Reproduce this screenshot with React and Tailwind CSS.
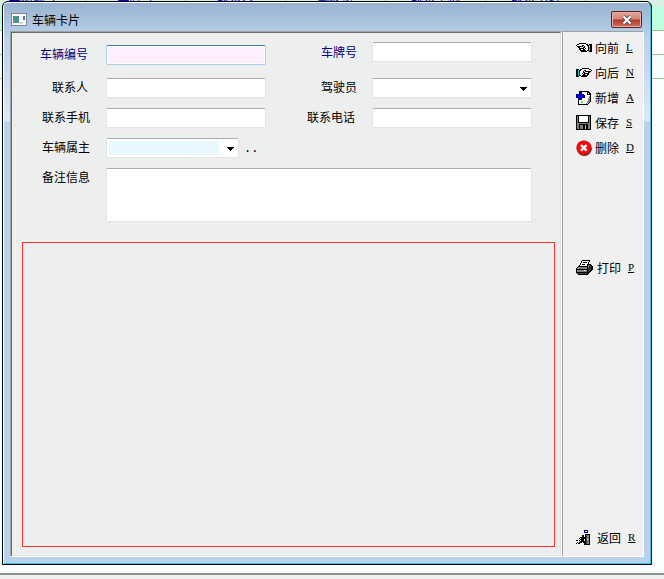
import { useState } from 'react';
import clsx from 'clsx';

const palette = {
  k: '#000000',
  w: '#ffffff',
  g: '#808080',
  l: '#c0c0c0',
  d: '#404040',
  b: '#0000ff',
  n: '#000080',
  c: '#00e0e0',
  e: '#40f060',
};

const handLeft = [
  '...kkkkkkk......',
  '.kkwwwwwwwkk.kkk',
  'kwwwwwkkwwwkkckk',
  '.kkkkkkwkwwwkckk',
  '..kkwwwkkwwwkckk',
  '...kkkkkwkwwkckk',
  '...kkwwkkwwwkckk',
  '....kkkkkkwkkckk',
  '.....kkkkkk..kkk',
];

const handRight = handLeft.map((row) => row.split('').reverse().join(''));

const addPage = [
  '...kkkkkkkkkk..',
  '...nnnwwwwwkkk.',
  '...nbnwwwwwkwkk',
  'nnnnbnnnwwwkkkk',
  'nbbbbbbbnwwwwwk',
  'nbbbbbbbnwwwwgk',
  'nnnbbnnnnwwwwgk',
  '..nbbnwwwwwwggk',
  '..nnnnwwwwwwggk',
  '..kwwwwwwwwwggk',
  '..kwweewwwwgggk',
  '..kwweewwwwglk.',
  '..kwwwwwwwglk..',
  '..kkkkkkkkkk...',
];

const floppy = [
  'kkkkkkkkkkkkkkk',
  'kgkwwwwwwwwwkgk',
  'kgkwwwwwwwwwkgk',
  'kgkwwwwwwwwwkgk',
  'kgkwwwwwwwwwkgk',
  'kgkwwwwwwwwwkgk',
  'kgkwwwwwwwwwkgk',
  'kgkkkkkkkkkkkgk',
  'kgggggggggggggk',
  'kggkkkkkkkkkggk',
  'kggkgggkklkkggk',
  'kggkgggkklkkggk',
  'kggkgggkklkkggk',
  'kggkgggkklkkggk',
  'kkkkkkkkkkkkkkk',
];

const printer = [
  '......kkkkkkkk...',
  '.....kwwwwwwwk...',
  '.....kwkkkkwk....',
  '....kwwwwwwwk....',
  '....kwkkkwwkkkk..',
  '...kwwwwwwwkggkk.',
  '..kkkkkkkkkkgkgkk',
  '.kgggggggggkgkdkk',
  'kggggggggggkkddkk',
  'kkkkkkkkkkkkdddkk',
  'kgggggggwlgkddkk.',
  'kggggggggggkdkk..',
  'kkkkkkkkkkkkkk...',
  '.kdddddddddkk....',
  '..kkkkkkkkkk.....',
];

const exitDoor = [
  '........nnnn...',
  '........nwwn...',
  '........nnnn...',
  '...............',
  '.........kkkkk.',
  '......kk.kdggk.',
  '......kk.kdggk.',
  '....kkkkkkdggk.',
  '...k.kkkkkdggk.',
  '....kkkk.kdwgk.',
  'kk.k.kkk.kdggk.',
  '....kkkkkkdggk.',
  '.k.kkk.kkkdggk.',
  'k.kk....kkdggk.',
  '........kkkkkk.',
];

function PixelIcon({ rows }) {
  const width = rows[0].length;

  return (
    <svg
      width={width}
      height={rows.length}
      viewBox={`0 0 ${width} ${rows.length}`}
      shapeRendering="crispEdges"
      aria-hidden="true"
      className="shrink-0"
    >
      {rows.map((row, y) =>
        row.split('').map((p, x) =>
          palette[p] ? <rect key={`${x}-${y}`} x={x} y={y} width="1" height="1" fill={palette[p]} /> : null
        )
      )}
    </svg>
  );
}

function DeleteIcon() {
  return (
    <svg width="16" height="16" viewBox="0 0 16 16" aria-hidden="true" className="shrink-0">
      <circle cx="8.3" cy="8.3" r="7.6" fill="#7a2020" />
      <circle cx="7.7" cy="7.7" r="7.3" fill="#f00c10" />
      <path d="M5 5l5.6 5.6M10.6 5L5 10.6" stroke="#fff" strokeWidth="2.4" />
    </svg>
  );
}

function WindowIcon() {
  return (
    <svg width="16" height="13" viewBox="0 0 16 13" aria-hidden="true" className="shrink-0">
      <rect width="16" height="13" fill="#7f858c" />
      <rect x="1" y="1" width="14" height="11" fill="#fafafa" />
      <rect x="2" y="3" width="6" height="7" fill="#4f8f96" />
      <rect x="2" y="3" width="3" height="4" fill="#3c9a78" />
      <rect x="12" y="3" width="2" height="4" fill="#3f7fb8" />
      <rect x="8" y="9" width="4" height="2" fill="#d4d4d4" />
    </svg>
  );
}

const fieldBorder = 'border border-[#e2e3ea] border-t-[#abadb3] rounded-[2px]';

function Label({ htmlFor, className, children }) {
  return (
    <label htmlFor={htmlFor} className={clsx('pb-[2px] text-right whitespace-nowrap', className)}>
      {children}
    </label>
  );
}

function TextField({ id, className }) {
  const [value, setValue] = useState('');

  return (
    <input
      id={id}
      type="text"
      value={value}
      onChange={(e) => setValue(e.target.value)}
      className={clsx('block w-full h-5 px-px outline-none', className || `bg-white ${fieldBorder}`)}
    />
  );
}

function SelectField({ id, className, selectClass }) {
  return (
    <div className={clsx('relative h-5 bg-white', fieldBorder, className)}>
      <select
        id={id}
        className={clsx('block w-full h-full appearance-none outline-none bg-clip-content py-[2px] pl-[2px] pr-[19px]', selectClass)}
      >
        <option value=""></option>
      </select>
      <svg
        width="7"
        height="4"
        viewBox="0 0 7 4"
        shapeRendering="crispEdges"
        className="absolute right-1 top-2 pointer-events-none"
      >
        <path d="M0 0h7v1h-1v1h-1v1h-1v1h-1v-1h-1v-1h-1v-1h-1z" />
      </svg>
    </div>
  );
}

function SideButton({ icon, label, hotkey, className, iconClass = 'w-4' }) {
  return (
    <button type="button" className={clsx('flex h-[25px] items-center pl-[13px] whitespace-nowrap', className)}>
      <span className={clsx('shrink-0', iconClass)}>{icon}</span>
      <span className="ml-[3px]">{label}</span>
      <span className="ml-[7px] font-['Liberation_Serif',serif] text-[11px] underline">{hotkey}</span>
    </button>
  );
}

// grid of the parent window, only its edges stay visible
function VehicleList() {
  const headers = ['车辆编号', '车牌号', '联系人', '驾驶员', '联系手机', '联系电话'];

  return (
    <div className="col-start-1 row-start-1 flex flex-col bg-white overflow-hidden">
      <div className="flex h-[7px] shrink-0 overflow-hidden bg-[#d9f0e4] text-[#0000c8] leading-3">
        {headers.map((h, i) => (
          <div
            key={h}
            className={clsx('flex h-[7px] shrink-0 items-end justify-center overflow-hidden border-r border-[#a0c8a0] pb-1', i === 0 ? 'w-[86px] pr-5' : 'w-[100px]')}
          >
            {h}
          </div>
        ))}
      </div>
      <div className="h-6 border-b border-[#98c898] bg-[#bfffdf]" />
      <div className="h-6 border-b border-[#98c898] bg-white" />
      <div className="h-6 border-b border-[#98c898] bg-[#f5fffd]" />
      <div className="grow bg-[#fafffd]" />
      <div className="h-[6px] border-t-2 border-[#909090] bg-[#f0f0f0]" />
    </div>
  );
}

export default function App() {
  return (
    <div className="grid min-h-screen font-['Noto_Sans_CJK_SC',sans-serif] text-xs text-black">
      <VehicleList />

      <div className="col-start-1 row-start-1 z-10 mt-px mb-[14px] ml-[2px] mr-3 flex rounded-t-[6px] border border-black bg-black">
        <div className="flex grow flex-col rounded-t-[5px] border border-r-[#35c8e8] border-b-[#35c8e8] border-t-white border-l-white bg-[linear-gradient(#99b4d1_0px,#b9d1ea_34px,#dce9f6_118px,#b9d1ea_119px)] px-[6px] pb-[6px]">
          <div className="flex h-7 shrink-0 items-center pt-[5px] pl-px">
            <WindowIcon />
            <h1 className="ml-[5px]">车辆卡片</h1>
            <button
              type="button"
              aria-label="关闭"
              className="ml-auto mr-[2px] flex h-[17px] w-[31px] items-center justify-center rounded-[2px] border border-[#5c1f22] bg-[linear-gradient(#e5a49a_0px,#d5857a_7px,#b5382a_8px,#d0705c_15px)] shadow-[inset_0_0_0_1px_#e8b0a8]"
            >
              <svg width="12" height="10" viewBox="0 0 12 10" aria-hidden="true">
                <path d="M2.5 1.5L9.5 8.5M9.5 1.5L2.5 8.5" stroke="#5c5560" strokeWidth="4" />
                <path d="M2.5 1.5L9.5 8.5M9.5 1.5L2.5 8.5" stroke="#fff" strokeWidth="2" />
              </svg>
            </button>
          </div>

          <div className="flex grow">
            <form className="flex grow border border-r-white border-b-white border-t-[#a0a0a0] border-l-[#a0a0a0]">
              <div className="flex grow flex-col border border-r-[#e3e3e3] border-b-[#e3e3e3] border-t-[#696969] border-l-[#696969] bg-[#edefee]">
                <div className="grid grid-cols-[94px_1fr_106px_1fr] items-center gap-y-[10px] pt-[9px] pr-7">
                  <Label htmlFor="vehicleNo" className="pr-[18px] text-[#000080]">车辆编号</Label>
                  <div className="py-[3px]">
                    <TextField
                      id="vehicleNo"
                      className="rounded-[2px] border border-[#a9cfe6] border-t-[#3d7bad] bg-[#ffeeff] shadow-[inset_0_0_0_1px_#fff]"
                    />
                  </div>
                  <Label htmlFor="plateNo" className="self-start pr-[15px] leading-5 text-[#000080]">车牌号</Label>
                  <div className="self-start">
                    <TextField id="plateNo" />
                  </div>

                  <Label htmlFor="contact" className="pr-[18px]">联系人</Label>
                  <TextField id="contact" />
                  <Label htmlFor="driver" className="pr-[15px]">驾驶员</Label>
                  <SelectField id="driver" />

                  <Label htmlFor="mobile" className="pr-4">联系手机</Label>
                  <TextField id="mobile" />
                  <Label htmlFor="phone" className="pr-[17px]">联系电话</Label>
                  <TextField id="phone" />

                  <Label htmlFor="owner" className="pr-4">车辆属主</Label>
                  <div className="col-span-3 flex h-5 items-center">
                    <SelectField id="owner" className="w-[133px]" selectClass="bg-[#e8f8ff]" />
                    <button type="button" className="ml-[5px] pt-[2px] font-['Liberation_Mono',monospace] leading-5">..</button>
                  </div>

                  <Label htmlFor="remark" className="self-start pr-4 leading-[18px]">备注信息</Label>
                  <textarea
                    id="remark"
                    className={clsx('col-span-3 block h-[54px] w-full resize-none bg-white outline-none', fieldBorder)}
                  />
                </div>

                <div className="mt-5 mr-[5px] mb-2 ml-[10px] grow border border-[#ff3030]" />
              </div>
            </form>

            <div className="flex w-[82px] shrink-0 flex-col border border-r-white border-b-white border-t-[#a0a0a0] border-l-[#a0a0a0] bg-[#f0f0f0] pt-[3px] pb-[6px]">
              <SideButton icon={<PixelIcon rows={handLeft} />} label="向前" hotkey="L" />
              <SideButton icon={<PixelIcon rows={handRight} />} label="向后" hotkey="N" />
              <SideButton icon={<PixelIcon rows={addPage} />} label="新增" hotkey="A" />
              <SideButton icon={<PixelIcon rows={floppy} />} label="保存" hotkey="S" />
              <SideButton icon={<DeleteIcon />} label="删除" hotkey="D" />
              <SideButton icon={<PixelIcon rows={printer} />} label="打印" hotkey="P" className="mt-[95px]" iconClass="w-[18px]" />
              <SideButton icon={<PixelIcon rows={exitDoor} />} label="返回" hotkey="R" className="mt-auto" iconClass="w-[18px]" />
            </div>
          </div>
        </div>
      </div>
    </div>
  );
}
